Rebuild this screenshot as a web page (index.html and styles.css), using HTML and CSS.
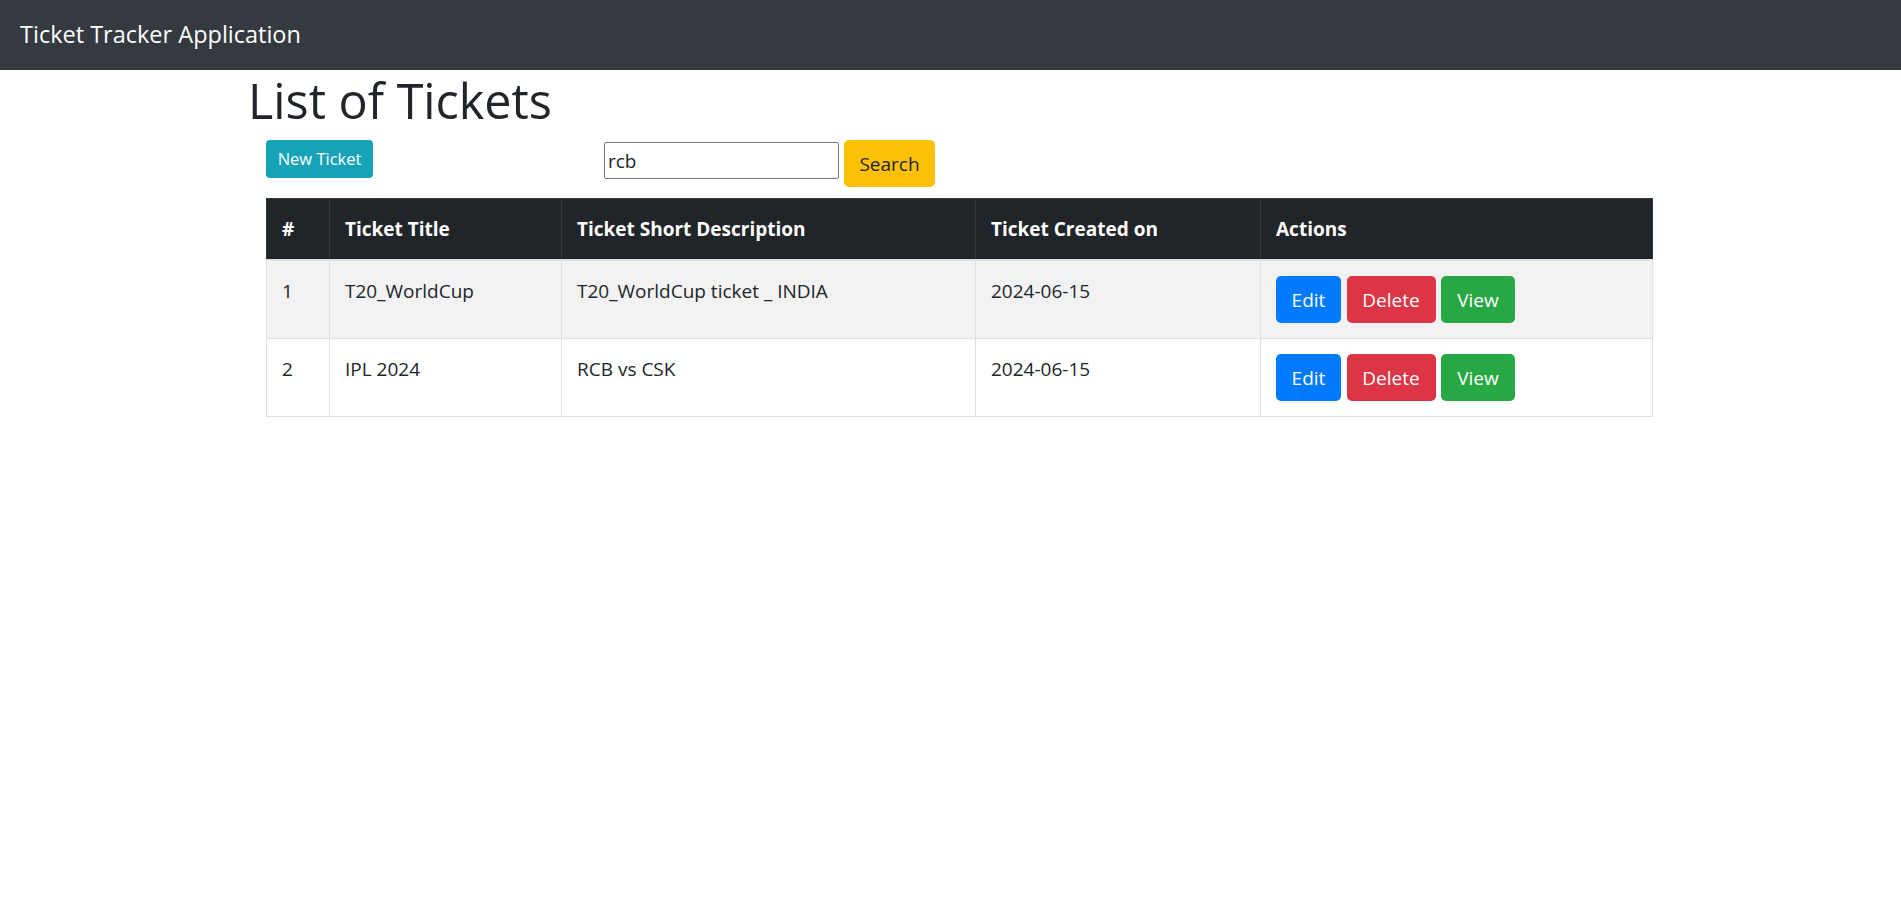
FILE: index.html
```html
<!DOCTYPE html>
<html lang="en">
<head>
<meta charset="utf-8">
<title>Ticket Tracker Application</title>
<link rel="stylesheet" href="styles.css">
</head>
<body>
<nav class="navbar">
  <span class="brand">Ticket Tracker Application</span>
</nav>
<div class="page">
  <h1 class="page-title">List of Tickets</h1>
  <div class="content">
    <div class="toolbar">
      <div class="toolbar-left">
        <button class="btn btn-sm btn-info" type="button">New Ticket</button>
      </div>
      <form class="search-form">
        <input class="search-input" type="text" value="rcb">
        <button class="btn btn-warning" type="button">Search</button>
      </form>
    </div>
    <table class="tickets">
      <colgroup>
        <col class="c-num">
        <col class="c-title">
        <col class="c-desc">
        <col class="c-date">
        <col class="c-actions">
      </colgroup>
      <thead>
        <tr>
          <th>#</th>
          <th>Ticket Title</th>
          <th>Ticket Short Description</th>
          <th>Ticket Created on</th>
          <th>Actions</th>
        </tr>
      </thead>
      <tbody>
        <tr class="striped">
          <td>1</td>
          <td>T20_WorldCup</td>
          <td>T20_WorldCup ticket _ INDIA</td>
          <td>2024-06-15</td>
          <td>
            <div class="actions">
              <button class="btn btn-edit" type="button">Edit</button>
              <button class="btn btn-delete" type="button">Delete</button>
              <button class="btn btn-view" type="button">View</button>
            </div>
          </td>
        </tr>
        <tr>
          <td>2</td>
          <td>IPL 2024</td>
          <td>RCB vs CSK</td>
          <td>2024-06-15</td>
          <td>
            <div class="actions">
              <button class="btn btn-edit" type="button">Edit</button>
              <button class="btn btn-delete" type="button">Delete</button>
              <button class="btn btn-view" type="button">View</button>
            </div>
          </td>
        </tr>
      </tbody>
    </table>
  </div>
</div>
</body>
</html>
```
FILE: styles.css
```css
* { box-sizing: border-box; }

body {
  margin: 0;
  font-family: "Open Sans", "Noto Sans", sans-serif;
  font-size: 19px;
  line-height: 30px;
  color: #212529;
  background: #fff;
}

.navbar {
  background: #343a40;
  padding: 10px 20px;
  height: 70px;
}

.brand {
  display: inline-block;
  color: #fff;
  font-size: 23.5px;
  line-height: 37.5px;
  padding: 6.25px 0;
}

.page {
  margin: 0 238px;
  padding: 0 10px;
}

.page-title {
  margin: 0 0 10px;
  font-size: 48.5px;
  line-height: 60px;
  font-weight: 500;
  color: #212529;
}

.content {
  padding: 0 0 0 18px;
}

.toolbar {
  display: flex;
  align-items: flex-start;
  height: 47px;
}

.toolbar-left {
  width: 338px;
}

.search-form {
  display: flex;
  align-items: flex-start;
  gap: 5px;
  margin: 0;
}

.search-input {
  margin-top: 2px;
  width: 235px;
  height: 37px;
  padding: 1px 3px;
  border: 1px solid #767676;
  border-radius: 2px;
  font-family: inherit;
  font-size: 19px;
  color: #212529;
}

.btn {
  display: inline-block;
  border: 1px solid transparent;
  border-radius: 5px;
  font-family: inherit;
  font-size: 19px;
  line-height: 30px;
  padding: 7.5px 15px;
  height: 47px;
  color: #fff;
  text-align: center;
  cursor: pointer;
}

.btn-sm {
  font-size: 16.5px;
  line-height: 26px;
  padding: 5px 10px;
  height: 38px;
  width: 107px;
  border-radius: 4px;
}

.btn-info { background: #17a2b8; }
.btn-warning { background: #ffc107; color: #212529; width: 91px; padding: 7.5px 0; }

.tickets {
  margin-top: 11px;
  width: 100%;
  table-layout: fixed;
  border-collapse: collapse;
  border: 1px solid #dee2e6;
}

.c-num { width: 63px; }
.c-title { width: 232px; }
.c-desc { width: 414px; }
.c-date { width: 285px; }

.tickets th,
.tickets td {
  padding: 15px;
  text-align: left;
  vertical-align: top;
  border: 1px solid #dee2e6;
}

.tickets th {
  background: #212529;
  color: #fff;
  font-weight: 700;
  vertical-align: bottom;
  border-color: #32383e;
  border-bottom: 2px solid #dee2e6;
}

.tickets td {
  height: 77px;
}

.striped td {
  background: #f2f2f2;
}

.actions {
  display: flex;
  gap: 5.5px;
}

.btn-edit { background: #007bff; width: 65px; padding: 7.5px 0; }
.btn-delete { background: #dc3545; width: 89px; padding: 7.5px 0; }
.btn-view { background: #28a745; width: 74px; padding: 7.5px 0; }
```
